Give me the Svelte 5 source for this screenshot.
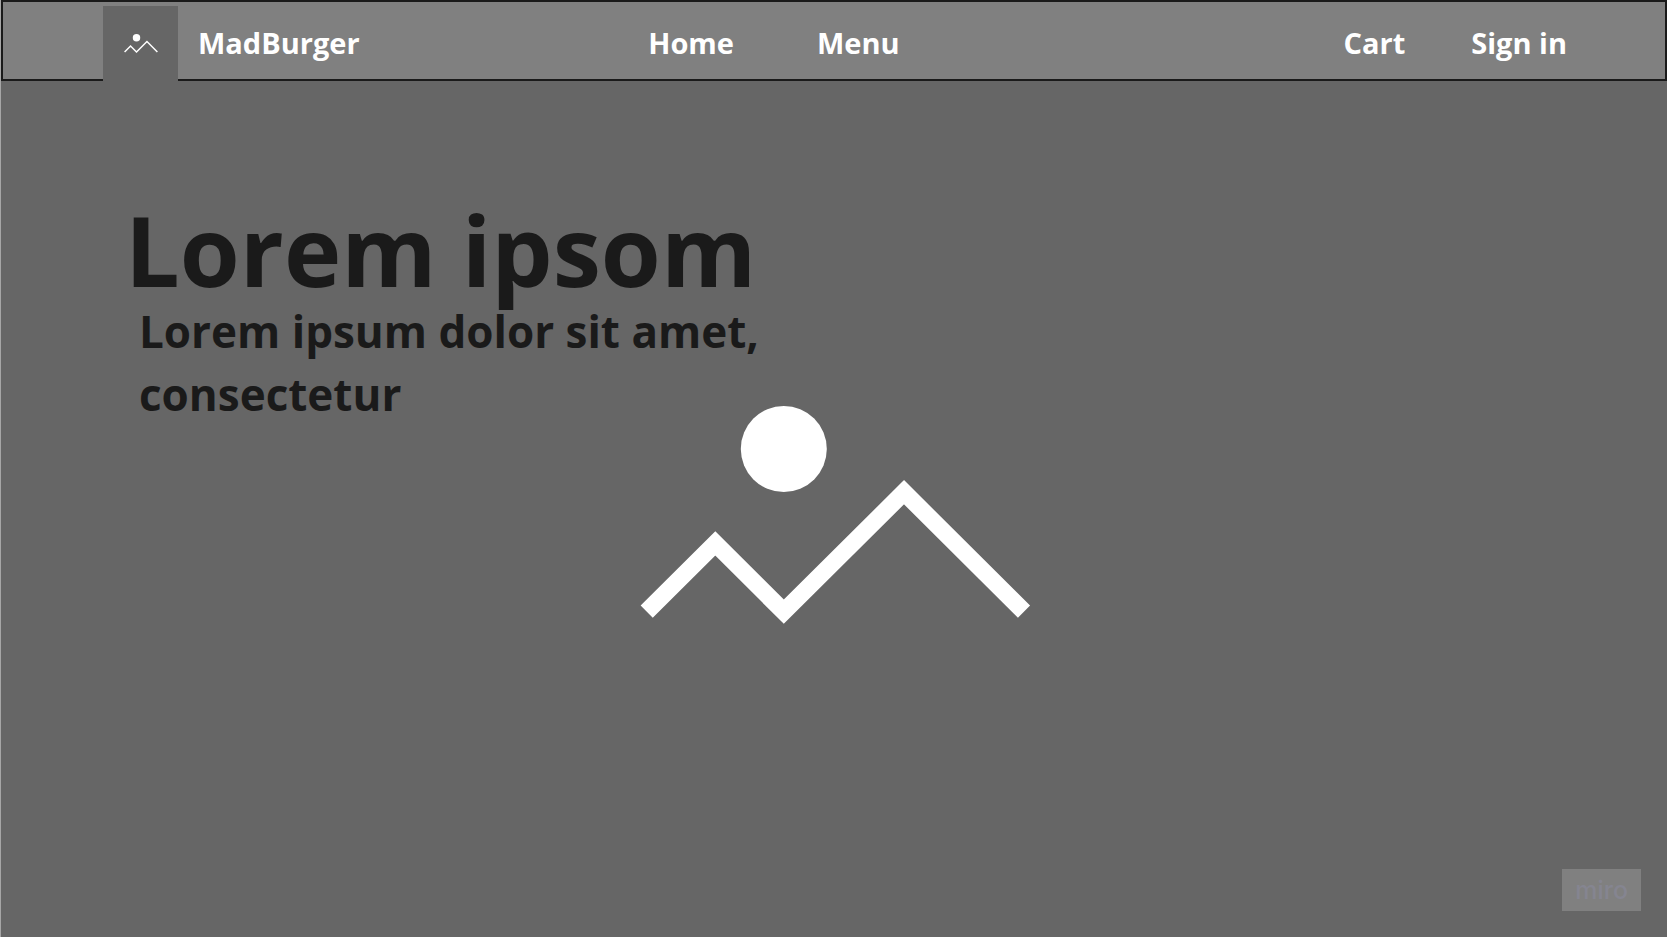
<script>
  const pages = ['Home', 'Menu'];
</script>

{#snippet picture()}
  <svg viewBox="0 0 391 220" aria-hidden="true">
    <circle cx="143.8" cy="44" r="43" fill="#fff" />
    <path
      d="M6.7 206.7 75.3 138.5 143.8 206.7 264 87.2 384 206.7"
      fill="none"
      stroke="#fff"
      stroke-width="17.2"
      stroke-miterlimit="10"
    />
  </svg>
{/snippet}

<div class="page">
  <header>
    <a class="brand" href="#home">
      <span class="logo">{@render picture()}</span>
      <span>MadBurger</span>
    </a>
    <nav class="pages" aria-label="Main">
      {#each pages as page}
        <a href="#{page.toLowerCase()}">{page}</a>
      {/each}
    </nav>
    <nav class="account" aria-label="Account">
      <a href="#cart">Cart</a>
      <a href="#sign-in">Sign in</a>
    </nav>
  </header>

  <main>
    <section class="intro">
      <h1>Lorem ipsom</h1>
      <p>Lorem ipsum dolor sit amet, consectetur</p>
    </section>
    <div class="art">{@render picture()}</div>
    <span class="mark">miro</span>
  </main>
</div>

<style>
  :global(body) {
    margin: 0;
    background: #666;
  }

  .page {
    box-sizing: border-box;
    min-height: 100vh;
    display: flex;
    flex-direction: column;
    border-left: 1px solid #a6a6a6;
    font-family: 'Open Sans', 'Noto Sans', sans-serif;
    font-weight: 700;
    color: #1a1a1a;
  }

  header {
    display: grid;
    grid-template-columns: 545fr 695fr auto;
    align-items: center;
    padding: 4px 98px 0 100px;
    border: 2px solid #1a1a1a;
    background: #808080;
    font-size: 29px;
    line-height: 43px;
  }

  a {
    color: #fff;
    text-decoration: none;
    white-space: nowrap;
  }

  .brand,
  .pages,
  .account {
    display: flex;
    align-items: center;
  }

  .brand {
    gap: 20px;
  }

  .pages {
    gap: 83px;
  }

  .account {
    gap: 66px;
  }

  .logo {
    display: grid;
    place-items: center;
    width: 75px;
    height: 75px;
    margin-bottom: -2px;
    background: #666;
  }

  .logo svg {
    width: 34px;
  }

  svg {
    display: block;
    width: 100%;
  }

  main {
    flex: 1;
    display: grid;
    grid-template-columns: minmax(0, 1fr);
    grid-template-rows: minmax(0, 1fr);
  }

  .intro,
  .art,
  .mark {
    grid-area: 1 / 1;
  }

  .intro {
    place-self: start;
    padding: 117px 0 0 124px;
  }

  h1 {
    margin: 0;
    font-size: 97px;
    line-height: 102px;
  }

  p {
    max-width: 640px;
    margin: 0;
    padding-left: 14px;
    font-size: 44px;
    line-height: 63px;
  }

  .art {
    place-self: center;
    width: 391px;
    padding: 12px 0 0 2px;
  }

  .mark {
    place-self: end;
    margin: 0 26px 26px 0;
    padding: 0 13px;
    background: #808080;
    color: #858590;
    font: 500 25px/42px Inter, sans-serif;
  }
</style>
